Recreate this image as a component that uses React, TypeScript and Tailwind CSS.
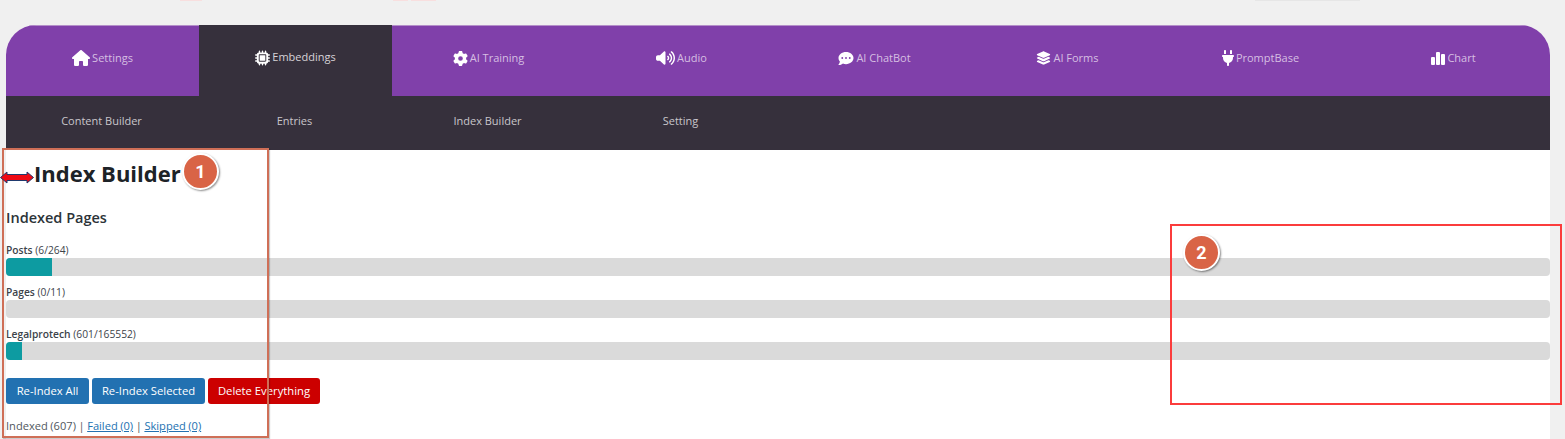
import React from "react";
import { FaHouse, FaMicrochip, FaGear, FaVolumeHigh, FaCommentDots, FaLayerGroup, FaPlug } from "react-icons/fa6";

const font = { fontFamily: '"Open Sans", "Noto Sans", sans-serif' };

function ChartIcon({ className }: { className?: string }) {
  return (
    <svg viewBox="0 0 14 14" className={className} fill="currentColor">
      <rect x="0" y="6" width="4" height="8" rx="1" />
      <rect x="5" y="1" width="4" height="13" rx="1" />
      <rect x="10" y="3" width="4" height="11" rx="1" />
    </svg>
  );
}

const tabs = [
  { label: "Settings", Icon: FaHouse, size: "w-[18px] h-[16px]" },
  { label: "Embeddings", Icon: FaMicrochip, size: "w-[15px] h-[16px]", active: true },
  { label: "AI Training", Icon: FaGear, size: "w-[15px] h-[15px]" },
  { label: "Audio", Icon: FaVolumeHigh, size: "w-[19px] h-[16px]" },
  { label: "AI ChatBot", Icon: FaCommentDots, size: "w-[16px] h-[15px]" },
  { label: "AI Forms", Icon: FaLayerGroup, size: "w-[15px] h-[16px]" },
  { label: "PromptBase", Icon: FaPlug, size: "w-[12px] h-[16px]" },
  { label: "Chart", Icon: ChartIcon, size: "w-[14px] h-[14px]" },
];

const bars = [
  { name: "Posts", count: "(6/264)", pct: "w-[46px]" },
  { name: "Pages", count: "(0/11)", pct: "w-0" },
  { name: "Legalprotech", count: "(601/165552)", pct: "w-[16px]" },
];

function Badge({ n, className }: { n: string; className: string }) {
  return (
    <div
      className={`absolute w-[37px] h-[37px] rounded-full bg-[#d96446] border-2 border-white shadow-[1px_1px_2px_rgba(0,0,0,0.45)] flex items-center justify-center text-white text-[18px] font-bold ${className}`}
      style={{ fontFamily: "Roboto, sans-serif" }}
    >
      {n}
    </div>
  );
}

export default function App() {
  return (
    <div className="relative w-[1565px] h-[439px] overflow-hidden bg-[#f0f0f0] pt-[25px] pl-[6px] pr-[15px]" style={font}>
      <div className="absolute top-0 left-[180px] w-[22px] h-px bg-[#f8dfdf]" />
      <div className="absolute top-0 left-[393px] w-[15px] h-px bg-[#f8dfdf]" />
      <div className="absolute top-0 left-[411px] w-[25px] h-px bg-[#f8dfdf]" />
      <div className="absolute top-0 left-[1255px] w-[105px] h-px bg-[#e6e6e6]" />

      <div className="h-full bg-white rounded-t-[30px] overflow-hidden flex flex-col">
        <div className="grid grid-cols-8 h-[71px] shrink-0 bg-[#8040aa] border-t border-t-[#b48fc9]">
          {tabs.map(({ label, Icon, size, active }) => (
            <div
              key={label}
              className={`flex items-center justify-center gap-[2px] pb-[6px] text-[11px] ${active ? "bg-[#36303c] text-[#d6d3d8] -mt-px" : "text-[#d6bfe2]"}`}
            >
              <Icon className={`${size} text-white`} />
              <span>{label}</span>
            </div>
          ))}
        </div>
        <div className="grid grid-cols-8 h-[54px] shrink-0 bg-[#36303c] text-[#c9c6cb] text-[11px]">
          {["Content Builder", "Entries", "Index Builder", "Setting"].map((s) => (
            <div key={s} className="flex items-center justify-center pb-[4px] pr-[2px]">{s}</div>
          ))}
        </div>
        <div className="flex-1">
          <h1 className="mt-[7px] ml-[28px] text-[22px] leading-[32px] font-bold text-[#1d2327]">Index Builder</h1>
          <h2 className="mt-[20px] text-[14.5px] leading-[18px] font-semibold text-[#2c3338]">Indexed Pages</h2>
          <div className="mt-[16px] flex flex-col gap-[9px]">
            {bars.map((b) => (
              <div key={b.name}>
                <div className="text-[10.5px] leading-[14px] mb-[1px] text-[#3c434a]">
                  <span className="font-semibold text-[10.25px]">{b.name}</span> <span className="text-[10.25px]">{b.count}</span>
                </div>
                <div className="h-[18px] rounded-[4px] bg-[#dadada] overflow-hidden">
                  <div className={`h-full bg-[#0d9ba1] ${b.pct}`} />
                </div>
              </div>
            ))}
          </div>
          <div className="mt-[18px] flex gap-[3px] text-[11.25px] text-white">
            <div className="h-[26px] w-[83px] rounded-[3px] bg-[#2271b1] flex items-center justify-center">Re-Index All</div>
            <div className="h-[26px] w-[113px] rounded-[3px] bg-[#2271b1] flex items-center justify-center">Re-Index Selected</div>
            <div className="h-[26px] w-[112px] rounded-[3px] bg-[#cc0000] flex items-center justify-center">Delete Everything</div>
          </div>
          <div className="mt-[14px] text-[11.1px] leading-[15px] text-[#50575e] [word-spacing:-0.3px]">
            Indexed (607) | <a className="text-[#2271b1] underline">Failed (0)</a> | <a className="text-[#2271b1] underline">Skipped (0)</a>
          </div>
        </div>
      </div>

      <div className="absolute left-[2px] top-[148px] w-[267px] h-[290px] border-2 border-[#cf6f57] shadow-[1px_1px_1px_rgba(0,0,0,0.2)]" />
      <div className="absolute left-[1170px] top-[224px] w-[392px] h-[181px] border-2 border-[#fb3c3c]" />
      <Badge n="1" className="left-[182px] top-[153px]" />
      <Badge n="2" className="left-[1183px] top-[234px]" />

      <svg className="absolute left-0 top-[171px]" width="34" height="13" viewBox="0 0 34 13">
        <path d="M0.5 6.5 L7 1 V3.5 H27 V1 L33.5 6.5 L27 12 V9.5 H7 V12 Z" fill="#ee0a14" stroke="#1f3a6e" strokeWidth="1" />
      </svg>
    </div>
  );
}
